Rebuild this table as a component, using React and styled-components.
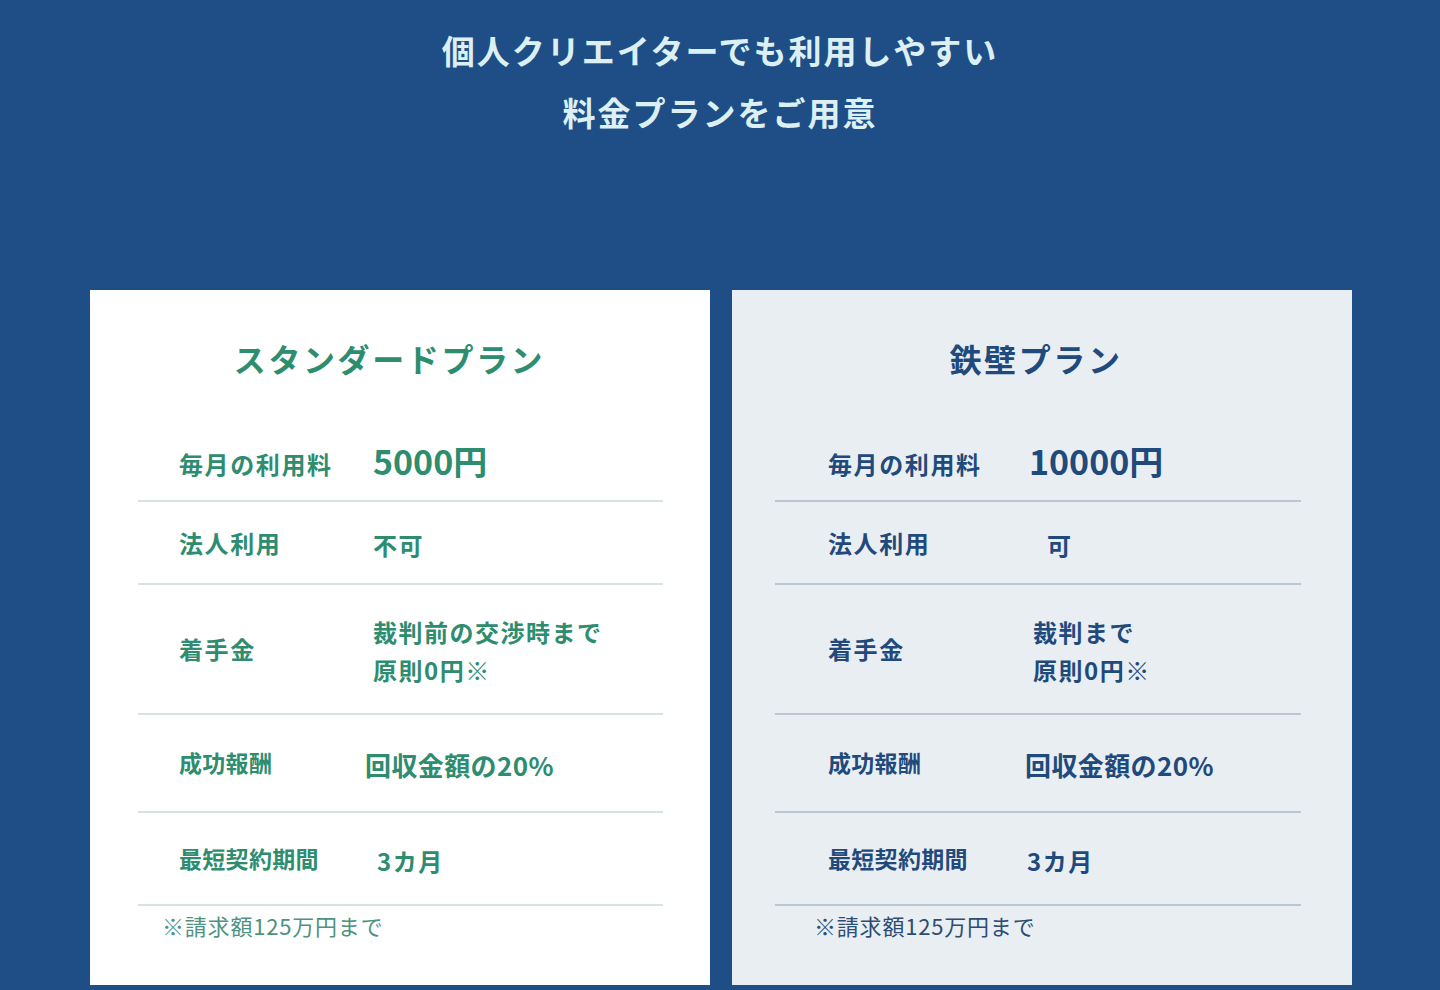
import styled, { createGlobalStyle } from "styled-components";

const GlobalStyle = createGlobalStyle`
  html, body {
    margin: 0;
    padding: 0;
    background: #1f4e86;
  }
  body {
    font-family: "Noto Sans CJK JP", "Noto Sans", sans-serif;
  }
`;

const themes = {
  standard: {
    bg: "#ffffff",
    color: "#2e8c6f",
    line: "#d6e5e1",
    note: "#4e927f",
    padL: 48,
    padR: 47,
    indent: 41,
    labelWidth: 194,
    noteIndent: 24,
    titlePad: 22,
  },
  iron: {
    bg: "#e9eef3",
    color: "#1f4a7b",
    line: "#b9c6d4",
    note: "#2d4d73",
    padL: 43,
    padR: 51,
    indent: 53,
    labelWidth: 201,
    noteIndent: 39,
    titlePad: 4,
  },
};

const plans = [
  {
    key: "standard",
    name: "スタンダードプラン",
    rows: [
      { label: "毎月の利用料", value: "5000円", price: true, h: 74 },
      { label: "法人利用", value: "不可", h: 83 },
      { label: "着手金", value: ["裁判前の交渉時まで", "原則0円※"], h: 130 },
      { label: "成功報酬", value: "回収金額の20%", tight: true, big: true, shift: -8, h: 98 },
      { label: "最短契約期間", value: "3カ月", tight: true, shift: 4, h: 93 },
    ],
  },
  {
    key: "iron",
    name: "鉄壁プラン",
    rows: [
      { label: "毎月の利用料", value: "10000円", price: true, h: 74 },
      { label: "法人利用", value: "可", shift: 18, h: 83 },
      { label: "着手金", value: ["裁判まで", "原則0円※"], shift: 4, h: 130 },
      { label: "成功報酬", value: "回収金額の20%", tight: true, big: true, shift: -4, h: 98 },
      { label: "最短契約期間", value: "3カ月", tight: true, shift: -2, h: 93 },
    ],
  },
];

const Section = styled.section`
  width: 1440px;
  height: 990px;
  box-sizing: border-box;
  padding-top: 19px;
  background: #1f4e86;
  overflow: hidden;
`;

const Heading = styled.h2`
  margin: 0 0 147px;
  text-align: center;
  font-size: 33px;
  line-height: 62px;
  font-weight: 700;
  letter-spacing: 2px;
  color: #dcf0f4;
`;

const Cards = styled.div`
  display: flex;
  justify-content: center;
  gap: 22px;
  padding-left: 2px;
`;

const Card = styled.div`
  width: 620px;
  height: 695px;
  box-sizing: border-box;
  padding: 48px ${(p) => p.$t.padR}px 0 ${(p) => p.$t.padL}px;
  background: ${(p) => p.$t.bg};
  color: ${(p) => p.$t.color};
  display: flex;
  flex-direction: column;
`;

const PlanName = styled.h3`
  margin: 0 0 50px;
  padding-right: ${(p) => p.$t.titlePad}px;
  text-align: center;
  font-size: 32px;
  line-height: 40px;
  font-weight: 700;
  letter-spacing: 2.6px;
`;

const Row = styled.div`
  display: grid;
  grid-template-columns: ${(p) => p.$t.labelWidth}px 1fr;
  align-items: center;
  height: ${(p) => p.$h}px;
  box-sizing: border-box;
  padding-left: ${(p) => p.$t.indent}px;
  border-bottom: 2px solid ${(p) => p.$t.line};
`;

const Label = styled.div`
  font-size: ${(p) => (p.$tight ? 23 : 24)}px;
  letter-spacing: ${(p) => (p.$tight ? 0.3 : 1.6)}px;
  line-height: 1.3;
  font-weight: 700;
  white-space: nowrap;
`;

const Value = styled.div`
  margin-left: ${(p) => p.$shift || 0}px;
  margin-top: ${(p) => (p.$price ? -6 : 4)}px;
  font-size: ${(p) => (p.$price ? 34 : p.$big ? 26 : 24)}px;
  letter-spacing: ${(p) => (p.$price ? 0 : p.$big ? 0.4 : 1.5)}px;
  line-height: ${(p) => (p.$price ? "40px" : "38px")};
  font-weight: 700;
  white-space: nowrap;
`;

const Note = styled.p`
  margin: 0;
  padding: 4px 0 0 ${(p) => p.$t.noteIndent}px;
  font-size: 22px;
  line-height: 30px;
  letter-spacing: 0.8px;
  font-weight: 400;
  color: ${(p) => p.$t.note};
`;

const PlanCard = ({ plan }) => {
  const t = themes[plan.key];
  return (
    <Card $t={t}>
      <PlanName $t={t}>{plan.name}</PlanName>
      {plan.rows.map((r) => (
        <Row key={r.label} $t={t} $h={r.h}>
          <Label $tight={r.tight}>{r.label}</Label>
          <Value $shift={r.shift} $price={r.price} $big={r.big}>
            {Array.isArray(r.value)
              ? r.value.map((line) => <div key={line}>{line}</div>)
              : r.value}
          </Value>
        </Row>
      ))}
      <Note $t={t}>※請求額125万円まで</Note>
    </Card>
  );
};

const App = () => (
  <Section>
    <GlobalStyle />
    <Heading>
      個人クリエイターでも利用しやすい
      <br />
      料金プランをご用意
    </Heading>
    <Cards>
      {plans.map((p) => (
        <PlanCard key={p.key} plan={p} />
      ))}
    </Cards>
  </Section>
);

export default App;
